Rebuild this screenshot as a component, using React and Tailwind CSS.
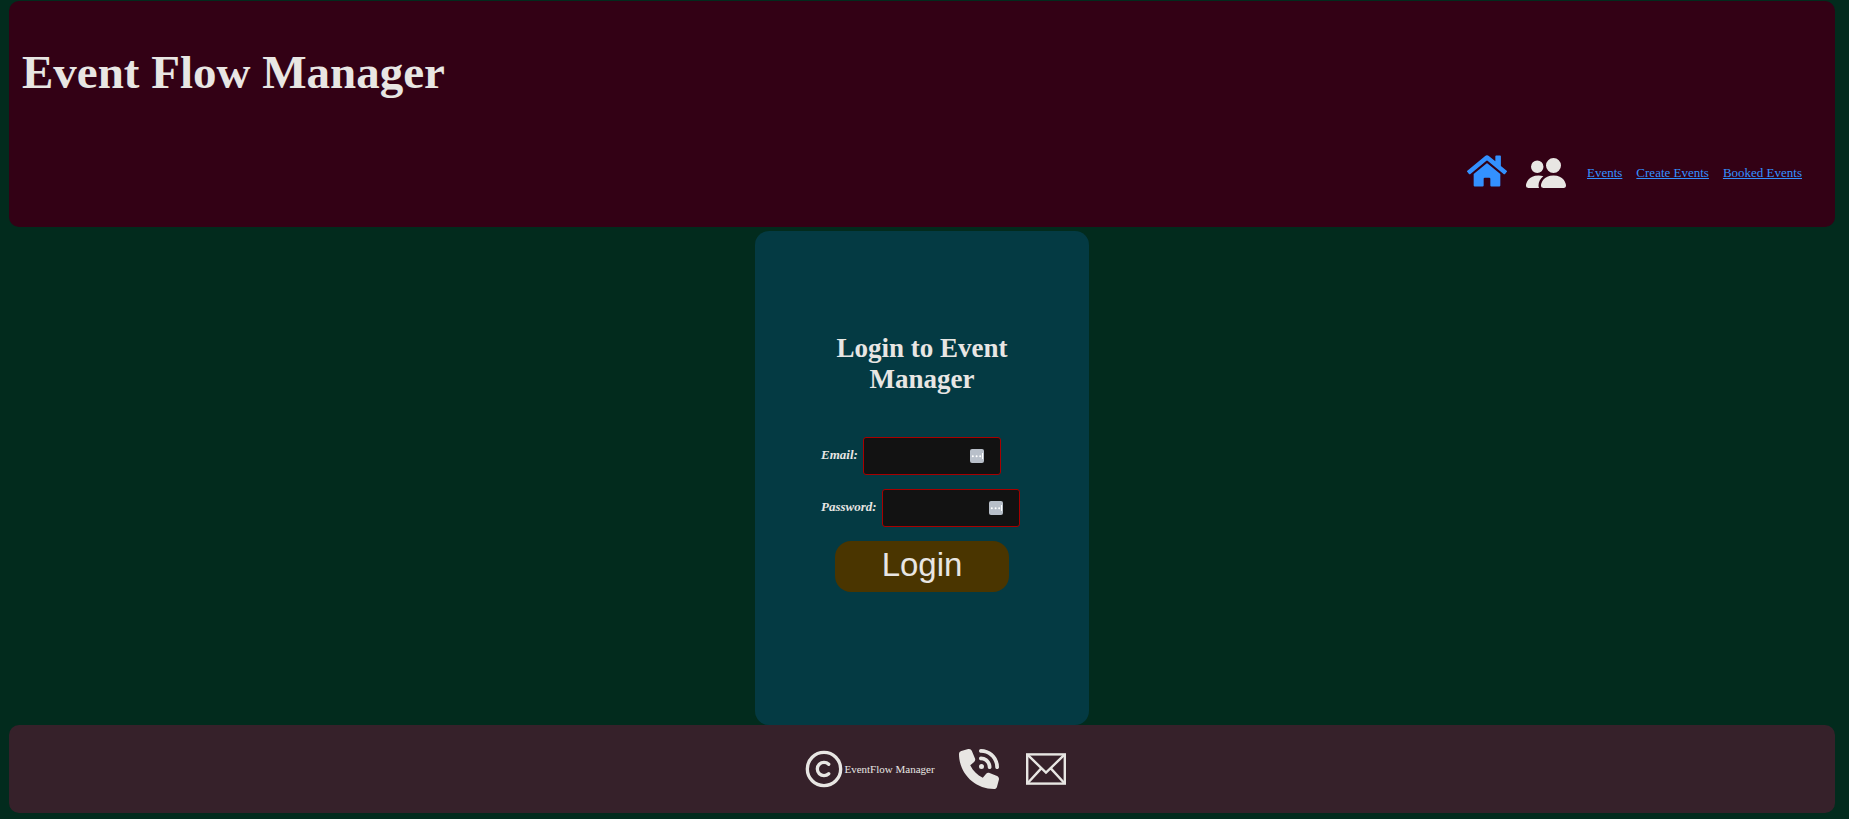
import { FaHome } from "react-icons/fa";
import { FaPhoneVolume } from "react-icons/fa6";
import { BsPeopleFill } from "react-icons/bs";
import { LuCopyright } from "react-icons/lu";

function EnvelopeIcon() {
  return (
    <svg
      viewBox="0 0 40 40"
      width="40"
      height="40"
      fill="none"
      stroke="currentColor"
      strokeWidth="2.4"
      aria-hidden="true"
    >
      <rect x="1.2" y="5.4" width="37.6" height="29.2" />
      <path d="M2 6.2 20 23.6 38 6.2M2 33.8 15 19.6M38 33.8 25 19.6" />
    </svg>
  );
}

function FieldIcon() {
  return (
    <svg
      viewBox="0 0 14 14"
      width="14"
      height="14"
      aria-hidden="true"
      className="pointer-events-none absolute top-3 right-[17px]"
    >
      <rect width="14" height="14" rx="2" fill="#b8bfc9" />
      <g fill="#fff">
        <circle cx="2.8" cy="7.3" r="1" />
        <circle cx="6.6" cy="7.3" r="1" />
        <circle cx="10.2" cy="7.3" r="1" />
        <rect x="12" y="4" width="1" height="6" />
      </g>
    </svg>
  );
}

function Field({ id, label, type }) {
  return (
    <div className="flex items-center gap-[5px]">
      <label htmlFor={id} className="pb-0.5 text-[13px] font-bold italic">
        {label}
      </label>
      <div className="relative">
        <input
          id={id}
          type={type}
          className="block h-[38px] w-[138px] rounded-[3px] border border-[#a80000] bg-[#121212] px-2 text-[13px] outline-none"
        />
        <FieldIcon />
      </div>
    </div>
  );
}

const links = ["Events", "Create Events", "Booked Events"];

export default function App() {
  return (
    <div className="flex min-h-screen flex-col bg-[#022b1d] pt-px pr-[14px] pb-1.5 pl-[9px] font-['Liberation_Serif',serif] text-[#e8e6e3]">
      <header className="rounded-[10px] bg-[#330115] px-[13px] pt-11 pb-8">
        <h1 className="text-[47px] leading-[54px] font-bold">Event Flow Manager</h1>
        <nav className="mt-[52px] flex items-center justify-end pr-5 text-[13px] text-[#3391ff]">
          <a href="#home" aria-label="Home" className="mr-[19px] pb-1">
            <FaHome size={40} />
          </a>
          <a href="#users" aria-label="Users" className="mr-[21px] text-[#e8e6e3]">
            <BsPeopleFill size={40} />
          </a>
          <div className="flex gap-[14px]">
            {links.map((text) => (
              <a key={text} href="#events" className="underline">
                {text}
              </a>
            ))}
          </div>
        </nav>
      </header>

      <main className="mt-1 flex grow justify-center">
        <form className="flex w-[334px] flex-col rounded-[14px] bg-[#043a43] px-[66px] pt-[102px] pb-[132px]">
          <h2 className="text-center text-[27px] leading-[31px] font-bold">Login to Event Manager</h2>
          <div className="mt-[42px] flex flex-col gap-3.5">
            <Field id="email" label="Email:" type="email" />
            <Field id="password" label="Password:" type="password" />
          </div>
          <button
            type="button"
            className="mt-3.5 h-[51px] w-[174px] self-center rounded-[16px] bg-[#4a3500] pb-1 font-['Liberation_Sans',sans-serif] text-[33px] leading-none"
          >
            Login
          </button>
        </form>
      </main>

      <footer className="flex h-[88px] items-center justify-center rounded-[10px] bg-[#36212a] pl-[26px]">
        <div className="flex items-center">
          <LuCopyright size={40} />
          <span className="text-[11px]">EventFlow Manager</span>
        </div>
        <a href="#phone" aria-label="Phone" className="ml-6">
          <FaPhoneVolume size={40} />
        </a>
        <a href="#mail" aria-label="Email us" className="ml-[27px]">
          <EnvelopeIcon />
        </a>
      </footer>
    </div>
  );
}
